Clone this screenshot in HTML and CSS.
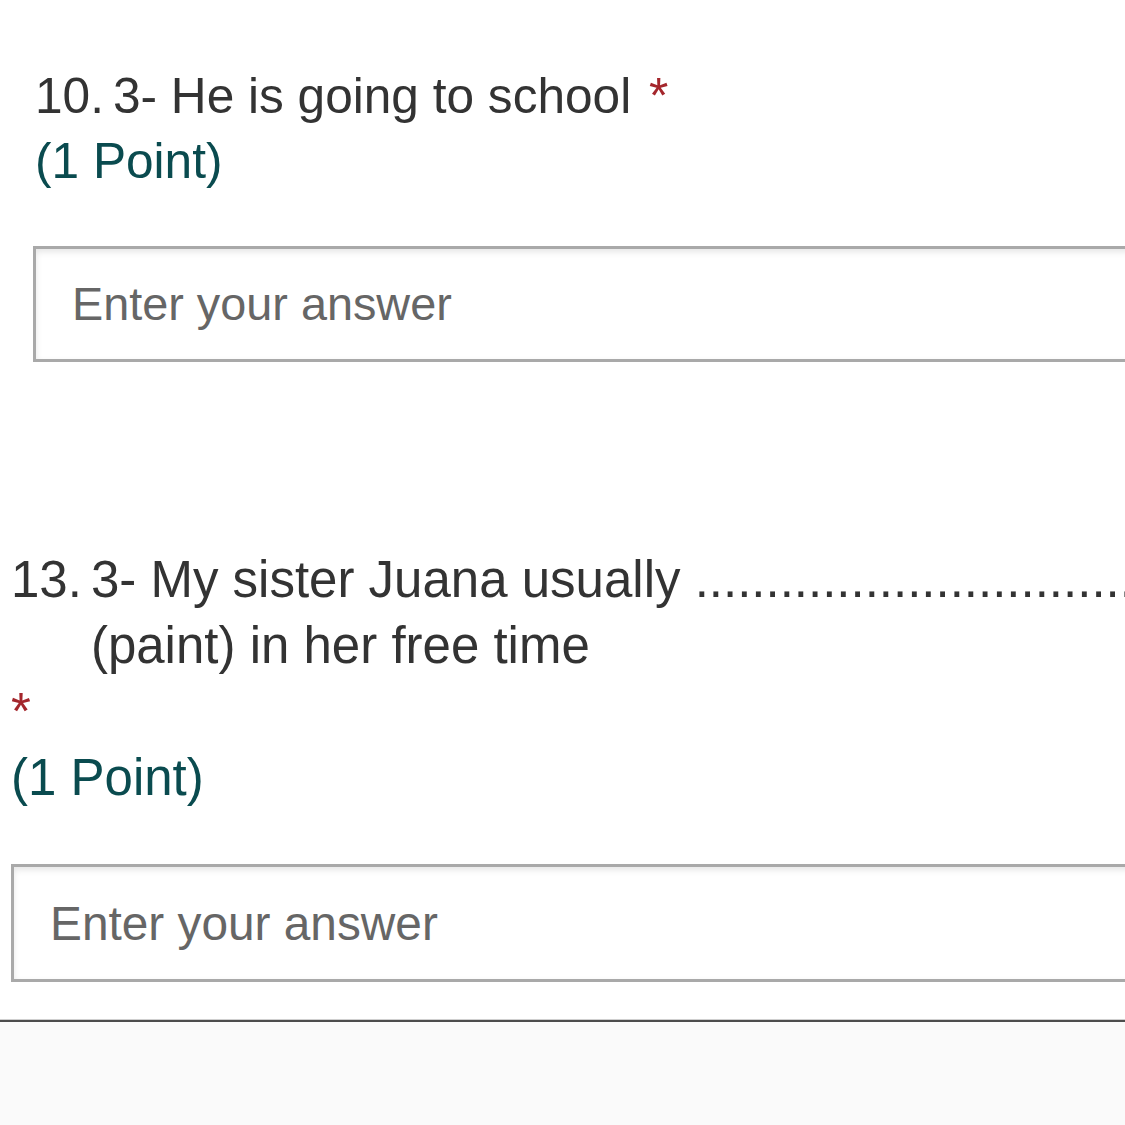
FILE: index.html
```html
<!DOCTYPE html>
<html lang="en">
<head>
<meta charset="utf-8">
<title>Quiz</title>
<link rel="stylesheet" href="styles.css">
</head>
<body>
<main class="form">
  <section class="question q1">
    <div class="q-title">
      <span class="q-num">10.</span>
      <span class="q-text">3- He is going to school <span class="req req-inline">*</span></span>
    </div>
    <div class="points">(1 Point)</div>
    <div class="answer"><input class="answer-input" type="text" placeholder="Enter your answer"></div>
  </section>

  <section class="question q2">
    <div class="q-title">
      <span class="q-num">13.</span>
      <span class="q-text">3- My sister Juana usually ........................................ (paint) in her free time</span>
    </div>
    <div class="req req-line">*</div>
    <div class="points">(1 Point)</div>
    <div class="answer"><input class="answer-input" type="text" placeholder="Enter your answer"></div>
  </section>
</main>
<footer class="footer"></footer>
</body>
</html>
```

FILE: styles.css
```css
html, body {
  margin: 0;
  padding: 0;
  overflow: hidden;
  background: #ffffff;
}

body {
  width: 1125px;
  height: 1125px;
  display: flex;
  flex-direction: column;
  font-family: "Liberation Sans", Arial, sans-serif;
  color: #333333;
}

.form {
  width: 1300px;
  flex: none;
}

.question {
  box-sizing: border-box;
}

.q1 {
  padding: 64px 0 0 33px;
  font-size: 49.6px;
  line-height: 65px;
}

.q1 .q-title,
.q1 .points {
  padding-left: 2px;
}

.q2 {
  padding: 185px 0 0 11px;
  font-size: 51px;
  line-height: 66px;
}

.q-title {
  display: flex;
  gap: 9px;
}

.q-num {
  flex: none;
}

.q-text {
  flex: 1;
  min-width: 0;
}

.req {
  color: #a4262c;
}

.req-inline {
  margin-left: 4px;
}

.req-line {
  display: block;
}

.points {
  color: #0a4b4f;
}

.answer {
  margin-top: 52px;
}

.q2 .answer {
  margin-top: 53px;
}

.answer-input {
  display: block;
  box-sizing: border-box;
  width: 1250px;
  height: 116px;
  margin: 0;
  padding: 0 0 0 36px;
  border: 3px solid #a9a9a9;
  border-radius: 0;
  background: #ffffff;
  box-shadow: inset 0 3px 6px rgba(0, 0, 0, 0.10);
  font-family: "Liberation Sans", Arial, sans-serif;
  font-size: 46.8px;
  color: #333333;
  outline: none;
}

.q2 .answer-input {
  height: 118px;
  font-size: 47.8px;
  padding-left: 36px;
}

.answer-input::placeholder {
  color: #666666;
  opacity: 1;
}

.footer {
  margin-top: 38px;
  flex: 1;
  background: #fafafa;
  border-top: 2px solid #4d4d4d;
  box-shadow: 0 -1px 0 #cfcfcf;
}
```
